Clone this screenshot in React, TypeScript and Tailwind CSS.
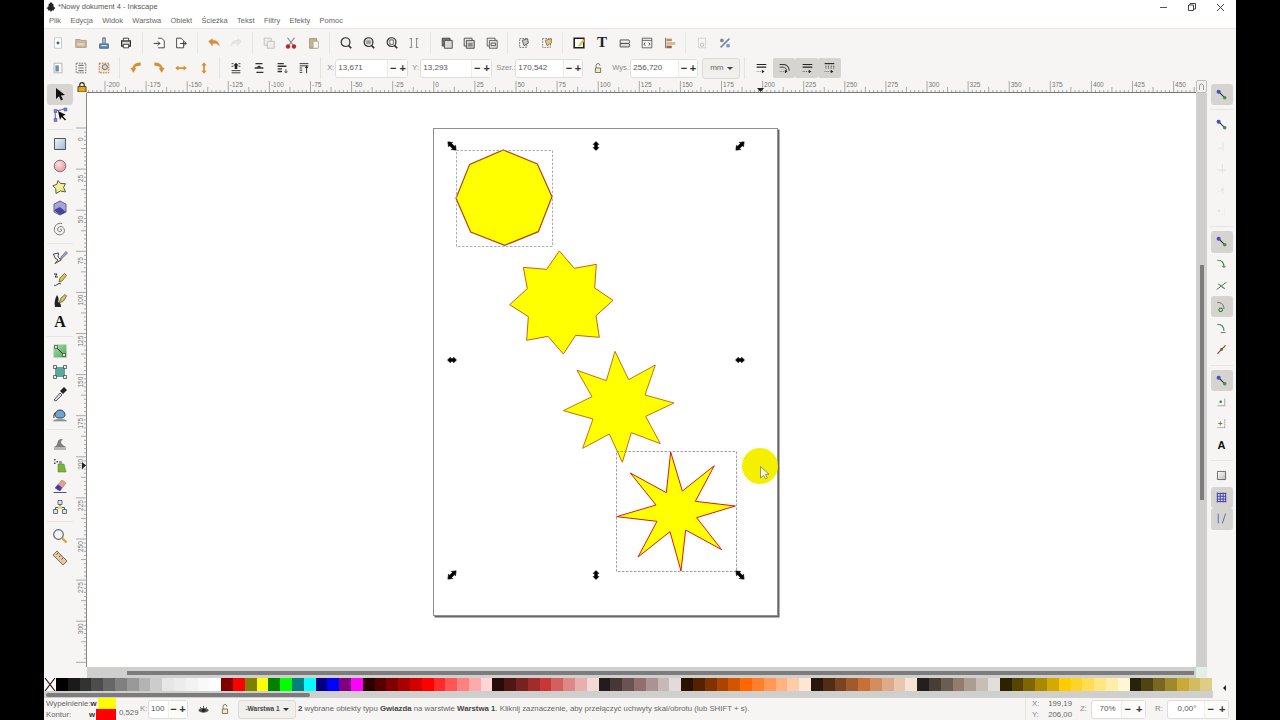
import type { ReactNode } from "react";

const font = "font-['Liberation_Sans',sans-serif]";

const palette = [
  "#000000", "#1a1a1a", "#333333", "#4d4d4d", "#666666", "#808080", "#999999", "#b3b3b3", "#cccccc", "#e6e6e6", "#ececec", "#f2f2f2", "#f9f9f9", "#ffffff",
  "#800000", "#ff0000", "#808000", "#ffff00", "#008000", "#00ff00", "#008080", "#00ffff", "#000080", "#0000ff", "#800080", "#ff00ff",
  "#2b0000", "#550000", "#800000", "#aa0000", "#d40000", "#ff0000", "#ff2a2a", "#ff5555", "#ff8080", "#ffaaaa", "#ffd5d5",
  "#280b0b", "#501616", "#782121", "#a02c2c", "#c83737", "#d35f5f", "#de8787", "#e9afaf", "#f4d7d7",
  "#241c1c", "#483737", "#6c5353", "#916f6f", "#ac9393", "#c8b7b7", "#e3dbdb",
  "#2b1100", "#552200", "#803300", "#aa4400", "#d45500", "#ff6600", "#ff7f2a", "#ff9955", "#ffb380", "#ffccaa", "#ffe6d5",
  "#28170b", "#502d16", "#784421", "#a05a2c", "#c87137", "#d38d5f", "#deaa87", "#e9c6af", "#f4e3d7",
  "#241f1c", "#483e37", "#6c5d53", "#917c6f", "#ac9d93", "#c8beb7", "#e3dedb",
  "#2b2200", "#554400", "#806600", "#aa8800", "#d4aa00", "#ffcc00", "#ffd42a", "#ffdd55", "#ffe680", "#ffeeaa", "#fff6d5",
  "#28220b", "#504416", "#786721", "#a0892c", "#c8ab37", "#d3bc5f", "#decd87",
];

const arrowOrange = "#d9902f";

const icons: Record<string, ReactNode> = {
  new: <><path d="M4 2h8v12H4z" fill="#fff" stroke="#c4c4c4" /><circle cx="8" cy="8" r="1.7" fill="#3465a4" /></>,
  open: <><path d="M2 4h5l1 1h6v8H2z" fill="#c7b99f" stroke="#a99a80" /><path d="M4 8h8v3H4z" fill="#ddd3bf" /></>,
  save: <><path d="M3 9h10v5H3z" fill="#5f8ab8" stroke="#41648c" /><path d="M6.5 2h3v7h-3z" fill="#a9bccb" stroke="#5f7488" /><path d="M5 11h6" stroke="#fff" /></>,
  print: <><path d="M3 5.5h10v6H3z" fill="#d8d8d8" stroke="#2e2e2e" strokeWidth="1.4" /><path d="M5 2.5h6v3H5zM5 9.5h6v4H5z" fill="#fff" stroke="#2e2e2e" /></>,
  import: <><path d="M7 2.5h4l3 3v8H7" fill="#fff" stroke="#333" /><path d="M2 8.5h7M6.5 6l2.5 2.5L6.5 11" fill="none" stroke="#222" /></>,
  export: <><path d="M3 2.5h5l3 3v8H3z" fill="#fff" stroke="#333" /><path d="M7 8.5h7M11.5 6L14 8.5 11.5 11" fill="none" stroke="#222" /></>,
  undo: <path d="M2 6l4-3v2.2c4-.5 7.5 1.5 8 6-1.5-2.5-4-3-8-2.7V11z" fill={arrowOrange} stroke="#b87820" strokeWidth=".5" />,
  redo: <path d="M14 6l-4-3v2.2c-4-.5-7.5 1.5-8 6 1.5-2.5 4-3 8-2.7V11z" fill="#e6e5e2" stroke="#d4d3d0" strokeWidth=".5" />,
  copy: <><path d="M2.5 2.5h8v8h-8z" fill="#f3f2f0" stroke="#bcbcbc" /><path d="M6 6h8v8H6z" fill="#eeeeec" stroke="#bcbcbc" /></>,
  cut: <><path d="M4 2l6 8M12 2l-6 8" stroke="#8a8a8a" strokeWidth="1.4" /><circle cx="4.6" cy="12" r="2.5" fill="#b52a2a" /><circle cx="11.4" cy="12" r="2.5" fill="#b52a2a" /></>,
  paste: <><path d="M3 3h8v11H3z" fill="#c8b48f" stroke="#a0906f" /><path d="M7 6h6v8H7z" fill="#f7f7f5" stroke="#aaa" /></>,
  zoom1: <><circle cx="7.5" cy="7" r="5" fill="#eee" stroke="#333" strokeWidth="1.4" /><path d="M11 11l3 3" stroke="#333" strokeWidth="2" /></>,
  zoom2: <><circle cx="7.5" cy="7" r="5" fill="#ddd" stroke="#333" strokeWidth="1.4" /><path d="M5 5h5v4H5z" fill="#999" /><path d="M11 11l3 3" stroke="#333" strokeWidth="2" /></>,
  zoom3: <><circle cx="7.5" cy="7" r="5" fill="#eee" stroke="#333" strokeWidth="1.4" /><path d="M5.5 4.5h4v5h-4z" fill="#fff" stroke="#555" /><path d="M11 11l3 3" stroke="#333" strokeWidth="2" /></>,
  fit: <path d="M3 3h3M10 3h3M3 13h3M10 13h3M5 3v10M11 3v10" fill="none" stroke="#777" />,
  group1: <><path d="M2.5 2.5h9v9h-9z" fill="#777" stroke="#444" /><path d="M5 5h9v9H5z" fill="#d8d8d6" stroke="#444" /></>,
  group2: <><path d="M2.5 2.5h9v9h-9z" fill="#eee" stroke="#444" /><path d="M5 5h9v9H5z" fill="#ccc" stroke="#444" /><path d="M7 8h5v4H7z" fill="#888" /></>,
  group3: <><path d="M2.5 2.5h9v9h-9z" fill="#f5f5f3" stroke="#555" /><path d="M5 5h9v9H5z" fill="#e2e2e0" stroke="#555" /><path d="M7 8h5v3H7z" fill="none" stroke="#555" /></>,
  clone1: <><path d="M3 3h8v10H3z" fill="none" stroke="#666" strokeDasharray="2 1" /><path d="M6 5l6-2 1 5-5 3z" fill="#c7c7c5" stroke="#555" /></>,
  clone2: <><path d="M3 3h9v10H3z" fill="none" stroke="#777" strokeDasharray="2 1" /><path d="M6 5l7-2v5l-5 3z" fill="#d9c98a" stroke="#86763c" /></>,
  fillStroke: <><path d="M2.5 2.5h11v11h-11z" fill="#fff" stroke="#1f1f1f" strokeWidth="1.8" /><path d="M7 11l6-8 1 3-5 6z" fill="#d9c63a" /></>,
  layers: <><path d="M2.5 4.5h10l1 2-1 2h-10z" fill="#eee" stroke="#444" /><path d="M2.5 8.5h10l1 2-1 2h-10z" fill="#ddd" stroke="#444" /></>,
  xml: <><path d="M2.5 2.5h11v11h-11z" fill="#f4f4f2" stroke="#555" /><path d="M2.5 5h11" stroke="#555" /><path d="M6 7.5L4.5 9.3 6 11M10 7.5l1.5 1.8L10 11" fill="none" stroke="#333" /></>,
  align: <><path d="M3 2v12" stroke="#555" /><path d="M4 3h6v3H4z" fill="#c88a5c" /><path d="M4 7h10v3H4z" fill="#c9b79a" /><path d="M4 11h6v3H4z" fill="#b35a4a" /></>,
  prefsDoc: <><path d="M4 2.5h8v11H4z" fill="#f6f6f4" stroke="#d0d0ce" /><circle cx="8" cy="10" r="2" fill="none" stroke="#b5b5b3" /></>,
  prefs: <><path d="M3 13L13 3" stroke="#6f8eb0" strokeWidth="2" /><circle cx="4.5" cy="5" r="2.2" fill="#8a8a88" /><circle cx="11.5" cy="11" r="2.2" fill="#7d9ab8" /></>,
  selAll: <><path d="M3.5 2.5h9v11h-9z" fill="#fff" stroke="#aaa" /><path d="M5 5h4v7H5z" fill="#6b8fb5" /></>,
  selLayer: <><path d="M2.5 2.5h11v11h-11z" fill="none" stroke="#666" strokeDasharray="2 1" /><path d="M5 5h6M5 8h6M5 11h6" stroke="#777" strokeWidth="1.4" /></>,
  deselect: <><path d="M2.5 2.5h11v11h-11z" fill="#f0e5d5" stroke="#b86b30" strokeDasharray="2 1" /><circle cx="9" cy="7" r="3" fill="#d4d4d2" stroke="#666" /></>,
  rotL: <path d="M13 2c-5 0-8 2-9 6H2l3 5 3-5H6c.5-2 3-3 7-3z" fill={arrowOrange} stroke="#bb7a24" strokeWidth=".4" />,
  rotR: <path d="M3 2c5 0 8 2 9 6h2l-3 5-3-5h2c-.5-2-3-3-7-3z" fill={arrowOrange} stroke="#bb7a24" strokeWidth=".4" />,
  flipH: <path d="M1.5 8L5 5v2h6V5l3.5 3L11 11V9H5v2z" fill={arrowOrange} />,
  flipV: <path d="M8 1.5L11 5H9v6h2l-3 3.5L5 11h2V5H5z" fill={arrowOrange} />,
  top: <><path d="M3 13.5h10M3 11h10" stroke="#222" /><path d="M6.5 9V5H5l3-3 3 3H9.5v4z" fill="#222" /><path d="M3 3h2M11 3h2M3 6h2M11 6h2" stroke="#222" /></>,
  up: <><path d="M4 3h8M3 8h10M5 13h8" stroke="#333" strokeWidth="1.6" /><path d="M8 5l-3 2h6z" fill="#222" /></>,
  down: <><path d="M3 3h7M3 6h10M3 9h5M3 12h5" stroke="#333" strokeWidth="1.5" /><path d="M12 9v3h-2l2.5 2 2.5-2h-2V9z" fill="#555" /></>,
  bottom: <><path d="M3 3h10M3 5.5h10M3 8h3M3 10.5h3M3 13h3" stroke="#222" /><path d="M10.5 14V8H9l2-3 2 3h-1.5v6z" fill="#222" /></>,
  tr1: <><path d="M3 4h11M3 7h11" stroke="#222" strokeWidth="1.4" /><path d="M3 12h6" stroke="#777" strokeDasharray="1 1" /><path d="M9 10l3 2-3 2z" fill="#222" /></>,
  tr2: <><path d="M3 4h5c3 0 6 3 6 7" fill="none" stroke="#333" strokeWidth="1.2" /><path d="M3 7h4c2 0 4 2 4 4" fill="none" stroke="#333" /><path d="M3 12h5" stroke="#777" strokeDasharray="1 1" /><path d="M9 10l3 2-3 2z" fill="#222" /></>,
  tr3: <><path d="M3 4h11M3 7h11" stroke="#222" strokeWidth="1.4" /><path d="M3 12h7" stroke="#555" strokeDasharray="1 1" /><path d="M10 10l3 2-3 2z" fill="#222" /></>,
  tr4: <><path d="M3 3h11" stroke="#222" strokeWidth="1.3" /><path d="M4 6h1M7 6h1M10 6h1M13 6h1M4 8h1M7 8h1M10 8h1M13 8h1" stroke="#222" strokeWidth="1.4" /><path d="M3 12h7" stroke="#555" strokeDasharray="1 1" /><path d="M10 10l3 2-3 2z" fill="#222" /></>,
  lockOpen: <><path d="M4.5 8h7v6h-7z" fill="#f4e9c4" stroke="#5c5434" /><path d="M5.5 8V4.5a2.5 2.5 0 015 0V5" fill="none" stroke="#555" /></>,
  eye: <><path d="M1.5 9c2-4 11-4 13 0-2 4-11 4-13 0z" fill="#555" /><circle cx="8" cy="9" r="2.2" fill="#222" /><path d="M4 5l1 2M8 3.5V6M12 5l-1 2" stroke="#333" /></>,
  selector: <path d="M4 2l0 11 3-2.7 2 4.2 2-1-2-4 4-.4z" fill="#111" />,
  node: <><path d="M3 3.5h4l6-2M3 3.5l.5 9" fill="none" stroke="#5b5bb5" /><path d="M2 2.5h3v3H2zM12 1h3v3h-3zM2 11.5h3v3H2z" fill="#8080cc" stroke="#4d4da0" strokeWidth=".5" /><path d="M6 4l2 9 1.5-3 3.5 3.5 1-1-3.3-3.5 3-1.2z" fill="#111" /></>,
  rect: <><path d="M2.5 2.5h11v11h-11z" fill="url(#rectGrad)" stroke="#555" /></>,
  circle: <circle cx="8" cy="8" r="5.8" fill="url(#circleGrad)" stroke="#777" />,
  star: <path d="M6 1.5l2.5 3 5 .2-2 3.6 2 4.6-5.2-1L4 14.5l-.2-4.7-3-3 4-1.4z" fill="#f2ef9c" stroke="#5b5b34" />,
  box3d: <><path d="M8 1L14 4v8l-6 3-6-3V4z" fill="#a4a4d6" stroke="#66668a" /><path d="M2 10l6-3 6 5-6 3z" fill="#45459a" /></>,
  spiral: <path d="M8 8.5c1-1 2 0 1.500 1.300-.7 1.300-3 1.200-3.700-.4-.8-2 .9-4 3-3.900 3 .2 4.400 3.500 3.100 6-1.500 2.700-5.500 3-7.800 1C1.500 10.500 1.900 6 4.500 3.700 6 2.500 8 2 10 2.500" fill="none" stroke="#666" strokeWidth=".9" />,
  pencil: <><path d="M1.500 4l5-1-.5 4 3 3-6 3.500 3-3.500L3 8z" fill="none" stroke="#444" /><path d="M8 11l1-4 5-5.500 1.500 1.500L10 8.500z" fill="#8fb0c9" stroke="#445" strokeWidth=".6" /></>,
  pen: <><path d="M2 2h3L3 5h3M2 13c2 2 4-3 7-1" fill="none" stroke="#333" /><path d="M7 10l1-4 4.500-4.500 2 2L10 9z" fill="#e8c93a" stroke="#444" strokeWidth=".7" /></>,
  calligraphy: <><path d="M3 14C2 9 3 6 5 2c2 3 2 5 1 7 2 .5 3 2 3 5z" fill="#222" /><path d="M7 10l2-5 4-3.500 1.500 1.500-3 5z" fill="#d9c84a" stroke="#444" strokeWidth=".7" /></>,
  gradient: <><path d="M1.500 1.500h13v13h-13z" fill="url(#gradGrad)" /><path d="M4 4l8 8" stroke="#333" /><path d="M2.500 2.500h3v3h-3zM10.500 10.500h3v3h-3z" fill="#ddd" stroke="#333" strokeWidth=".6" /></>,
  mesh: <><path d="M3 3h10v10H3z" fill="#5fa59a" /><path d="M1.500 1.500h3v3h-3zM11.500 1.500h3v3h-3zM1.500 11.500h3v3h-3zM11.500 11.500h3v3h-3z" fill="#eee" stroke="#333" strokeWidth=".7" /></>,
  dropper: <><path d="M2 14l6-7 2 2-6 6z" fill="#dde" stroke="#555" /><path d="M8 5l4-4 3 3-4 4z" fill="#222" /></>,
  bucket: <><path d="M3 8a5 5 0 0110 0c0 2-2 3-5 3S3 10 3 8z" fill="#6fa6d0" stroke="#345" /><path d="M1.500 14c2-2.500 11-2.500 13 0z" fill="#93a89e" stroke="#667" strokeWidth=".5" /><path d="M3 6c-1 1-1.500 3-1 5" fill="none" stroke="#333" /></>,
  tweak: <><path d="M2 11c3-1 3-3 4-6 1-2 4-3 5-1-2 0-2.500 2-1.500 3.500 1 1.500 3 2.500 4.500 3.500z" fill="#7d7d7d" /><path d="M2 11h12v3H2z" fill="#b5b5b5" /></>,
  spray: <><path d="M6 7h6l2 8H6z" fill="#7bb33a" stroke="#4a7a1c" strokeWidth=".5" /><path d="M7 4h3v3H7z" fill="#999" /><path d="M2 2h1.500v1.500H2zM4.500 4H6v1.500H4.500zM2 5.500h1.500V7H2z" fill="#444" /></>,
  eraser: <><path d="M3 10l7-8 4 3-6 8z" fill="#e2a28d" stroke="#a55" strokeWidth=".5" /><path d="M3 10l3-3.500 4 3L8 13z" fill="#3a3ac0" /><path d="M1.500 14.500h13" stroke="#555" /></>,
  connector: <><path d="M6 1.500h4v4H6zM1.500 10.500h4v4h-4zM10.500 10.500h4v4h-4z" fill="#dfe4ea" stroke="#456" strokeWidth=".8" /><path d="M8 5.500v3M3.500 10.500v-2h9v2" fill="none" stroke="#456" /><path d="M6 7h4v3H6z" fill="#f0d76a" /></>,
  zoom: <><circle cx="6.500" cy="6.500" r="4.800" fill="#f2f5f8" stroke="#667" strokeWidth="1.200" /><path d="M10 10l4.500 4.500" stroke="#d9a62e" strokeWidth="2.400" /></>,
  measure: <><path d="M1 5L5 1l10 10-4 4z" fill="#e3c8a8" stroke="#8a6f52" /><path d="M4.500 4.500L6 3M7 7l1.500-1.500M9.500 9.500L11 8" stroke="#6d5236" /></>,
  snapMain: <><path d="M5 5l7 7" stroke="#222" strokeWidth="1.300" /><circle cx="4.500" cy="4.500" r="2.500" fill="#4a4ac8" /><circle cx="12" cy="12" r="2.200" fill="#4f8a5a" /></>,
  faint1: <path d="M3 10h7M10 3v11" stroke="#e4e4e2" />,
  faint2: <path d="M3 10h10M9 3v10" stroke="#dadad8" />,
  faint3: <><path d="M3 10h7M10 4v9" stroke="#e6e6e4" /><circle cx="9" cy="8" r="1.300" fill="#ddd" /></>,
  faint4: <><path d="M3 12h9M12 4v8" stroke="#e4e4e2" strokeDasharray="1 1" /><circle cx="5" cy="7" r="1.300" fill="#ddd" /></>,
  snapPath: <><path d="M3 4c5 0 8 3 8 8" fill="none" stroke="#2f8a3f" strokeWidth="1.400" /><path d="M9 11l2 2 2-2" fill="none" stroke="#333" /></>,
  snapCross: <><path d="M2 13L14 4" stroke="#444" /><path d="M4 6l8 6" stroke="#3f8f5f" strokeWidth="1.400" /></>,
  snapPathActive: <><path d="M3 3c5 0 8 3 8 8" fill="none" stroke="#666" strokeWidth="1.200" /><circle cx="7" cy="12" r="2.200" fill="none" stroke="#2f7a2f" strokeWidth="1.300" /></>,
  snapTan: <><path d="M3 3c5 0 8 3 8 8" fill="none" stroke="#3f8f5f" strokeWidth="1.400" /><path d="M7 13h6" stroke="#555" /></>,
  snapMid: <><path d="M3 13L13 3" stroke="#b03030" strokeWidth="1.500" /><circle cx="8" cy="8" r="1.700" fill="#3f7a3f" /></>,
  snapBox: <><path d="M3 12h9V3" fill="none" stroke="#999" /><circle cx="7" cy="7" r="1.500" fill="#3f7a3f" /></>,
  snapCenter: <><path d="M3 13h9M12 3v10" stroke="#777" strokeDasharray="1.500 1" /><path d="M4 8h5M6.500 5.500v5" stroke="#3f7a3f" /></>,
  snapPage: <><path d="M3 3h10v10H3z" fill="url(#pageGrad)" stroke="#555" /></>,
  snapGrid: <path d="M3 2v12M6.500 2v12M10 2v12M13 2v12M2 3h12M2 6.500h12M2 10h12M2 13h12" stroke="#3a3ab0" strokeWidth="1.100" />,
  snapGuide: <path d="M4 2v12M13 2L9 14" stroke="#5070b0" strokeWidth="1.200" fill="none" />,
};

function Icon({ name, size = 15 }: { name: string; size?: number }) {
  return (
    <svg width={size} height={size} viewBox="0 0 16 16">
      {icons[name]}
    </svg>
  );
}

function Sep() {
  return <div className="ml-1 mr-[4.600px] h-[22px] w-px shrink-0 bg-[#e6e5e1]" />;
}

function Btn({ name, active }: { name: string; active?: boolean }) {
  return (
    <div className={`flex h-5 w-[22.700px] shrink-0 items-center justify-center rounded-[2px] ${active ? "bg-[#d6d4d0]" : ""}`}>
      <Icon name={name} size={14} />
    </div>
  );
}

function Label({ children, className = "" }: { children: ReactNode; className?: string }) {
  return <span className={`shrink-0 text-[7.500px] leading-none text-[#8a8a88] ${className}`}>{children}</span>;
}

function Spin({ value, width, field, center }: { value: string; width: string; field: string; center?: boolean }) {
  return (
    <div className={`flex h-[19px] shrink-0 items-center rounded-[3px] border border-[#dfdedb] bg-white text-[8px] text-[#555] ${width}`}>
      <span className={`${field} pl-[2px] ${center ? "text-center" : ""}`}>{value}</span>
      <div className="flex h-full flex-1 items-center justify-around border-l border-[#eeeeec] bg-[#fbfbfa] text-[11px] font-bold leading-none text-[#333]">
        <span>−</span>
        <span>+</span>
      </div>
    </div>
  );
}

function VSep({ h }: { h: string }) {
  return (
    <div className={`flex w-full shrink-0 items-center ${h}`}>
      <div className="h-px w-full bg-[#e6e5e1]" />
    </div>
  );
}

const top = ["new", "open", "save", "print", "|", "import", "export", "|", "undo", "redo", "|", "copy", "cut", "paste", "|", "zoom1", "zoom2", "zoom3", "fit", "|", "group1", "group2", "group3", "|", "clone1", "clone2", "|", "fillStroke", "T", "layers", "xml", "align", "|", "prefsDoc", "prefs"];
const leftTools = ["selector", "node", "|", "rect", "circle", "star", "box3d", "spiral", "|", "pencil", "pen", "calligraphy", "A", "|", "gradient", "mesh", "dropper", "bucket", "|", "tweak", "spray", "eraser", "connector", "|", "zoom", "measure"];
const snapTools = ["snapMain*", "|", "snapMain", "faint1", "faint2", "faint3", "faint4", "|", "snapMain*", "snapPath", "snapCross", "snapPathActive*", "snapTan", "snapMid", "|", "snapMain*", "snapBox", "snapCenter", "A", "|", "snapPage", "snapGrid*", "snapGuide*"];

function TopRuler() {
  const ticks = [];
  for (let i = -4; i < 266; i++) {
    const x = 18 + i * 4.11;
    const major = i % 10 === 0;
    const mid = i % 5 === 0;
    ticks.push(<path key={i} d={`M${x} 12V${major ? 1 : mid ? 7 : 10}`} stroke="#8a8a8a" strokeWidth=".7" />);
    if (major) {
      ticks.push(
        <text key={`t${i}`} x={x + 1.500} y={7} fontSize="6.500" fill="#777" fontFamily="Liberation Sans, sans-serif">
          {(i / 10) * 25 - 200}
        </text>,
      );
    }
  }
  return (
    <svg width="1109" height="13" className="block shrink-0">
      <path d="M0 12.500H1109" stroke="#777" />
      {ticks}
      <path d="M670 8h7l-3.500 4z" fill="#222" />
    </svg>
  );
}

function SideRuler() {
  const ticks = [];
  for (let i = 0; i < 131; i++) {
    const y = i * 4.11 + 35;
    const major = i % 10 === 0;
    const mid = i % 5 === 0;
    ticks.push(<path key={i} d={`M10.500 ${y}H${major ? 0 : mid ? 5 : 8}`} stroke="#8a8a8a" strokeWidth=".7" />);
    if (major && i < 130) {
      ticks.push(
        <text key={`t${i}`} fontSize="6.500" fill="#777" fontFamily="Liberation Sans, sans-serif" transform={`translate(7 ${y + 13}) rotate(-90)`}>
          {(i / 10) * 25}
        </text>,
      );
    }
  }
  return (
    <svg width="11" height="574" className="block shrink-0 bg-[#f6f5f3]">
      <path d="M10.500 0V574" stroke="#888" />
      {ticks}
      <path d="M6 369v7l4-3.500z" fill="#222" />
    </svg>
  );
}

function pts(raw: number[], ox: number, oy: number) {
  const out: string[] = [];
  for (let i = 0; i < raw.length; i += 2) out.push(`${ox + raw[i] / 3},${oy + raw[i + 1] / 3}`);
  return out.join(" ");
}

const handleShape = "M-4.500 0L-1.500-3V-1.500H1.500V-3L4.500 0 1.500 3V1.500H-1.500V3Z";
const handles: [number, number, number][] = [
  [452, 146, 45], [596, 146, 90], [740, 146, -45],
  [452, 360, 0], [740, 360, 0],
  [452, 575, -45], [596, 575, 90], [740, 575, 45],
];

function Drawing() {
  return (
    <svg width="1280" height="720" className="absolute left-[-87px] top-[-93px]">
      <polygon points={pts([220, 75, 322, 117, 366, 215, 325, 320, 224, 361, 122, 321, 78, 220, 119, 118], 430, 125)} fill="#ffff00" stroke="#b5460f" strokeWidth="1.200" />
      <polygon points={pts([388, 378, 433, 430, 499, 418, 494, 489, 549, 526, 498, 572, 508, 637, 437, 631, 400, 687, 354, 634, 290, 646, 295, 575, 239, 539, 292, 491, 280, 427, 350, 433], 430, 125)} fill="#ffff00" stroke="#c8640f" />
      <polygon points={pts([555, 19, 596, 104, 676, 60, 645, 150, 732, 174, 647, 214, 691, 296, 604, 263, 577, 352, 538, 267, 458, 310, 489, 222, 400, 197, 486, 155, 441, 76, 529, 107], 430, 345)} fill="#ffff00" stroke="#c8700f" />
      <polygon points={pts([722, 321, 757, 438, 853, 362, 796, 469, 916, 483, 800, 518, 875, 614, 767, 555, 753, 678, 720, 560, 624, 636, 681, 529, 560, 515, 678, 480, 601, 384, 709, 443], 430, 345)} fill="#ffff00" stroke="#d81c10" />
      <path d="M456.500 150.500H552.500V246.500H456.500Z" fill="none" stroke="#999" strokeWidth=".8" strokeDasharray="2.500 1.500" />
      <path d="M616.500 451.500H736.500V571.500H616.500Z" fill="none" stroke="#888" strokeWidth=".8" strokeDasharray="2.500 1.500" />
      {handles.map(([x, y, r]) => (
        <path
          key={`${x}-${y}`}
          d={handleShape}
          fill="#000"
          stroke="#000"
          strokeWidth=".5"
          transform={`translate(${x} ${y}) rotate(${r}) scale(${r === 0 || r === 90 ? 1 : 1.3} 1)`}
        />
      ))}
      <circle cx="760" cy="466" r="18" fill="#f5f000" />
      <path d="M760.500 466.500V478l3-2.500 2 3.300 1.800-1-1.900-3.200 3.600-.3z" fill="#f6f6d8" stroke="#777" strokeWidth=".8" />
    </svg>
  );
}

export default function App() {
  return (
    <div className={`flex h-[720px] w-[1280px] overflow-hidden bg-black ${font}`}>
      <svg width="0" height="0" className="absolute">
        <defs>
          <linearGradient id="rectGrad" x1="0" y1="0" x2="1" y2="1"><stop offset="0" stopColor="#eef4f9" /><stop offset="1" stopColor="#9dbad6" /></linearGradient>
          <radialGradient id="circleGrad" cx=".4" cy=".35"><stop offset="0" stopColor="#fbe4e8" /><stop offset="1" stopColor="#f2a5b0" /></radialGradient>
          <linearGradient id="gradGrad" x1="0" y1="0" x2="1" y2="1"><stop offset="0" stopColor="#a8dcaa" /><stop offset="1" stopColor="#4fa85a" /></linearGradient>
          <linearGradient id="pageGrad" x1="0" y1="0" x2="1" y2="1"><stop offset="0" stopColor="#fff" /><stop offset="1" stopColor="#bbb" /></linearGradient>
        </defs>
      </svg>

      <div className="ml-11 flex h-full w-[1192px] flex-col bg-[#f6f5f3]">
        <div className="flex h-[14px] shrink-0 items-center bg-white pl-[2px] text-[7.500px] text-[#555]">
          <svg width="10" height="10" viewBox="0 0 16 16" className="mr-[2px]">
            <path d="M8 0l5 5-2 1 4 4-2 1-1 3-2-1-2 3-2-3-2 1-1-3-2-1 4-4-2-1z" fill="#222" />
          </svg>
          <span>*Nowy dokument 4 - Inkscape</span>
          <div className="ml-auto flex items-center">
            <span className="h-px w-[7px] bg-[#555]" />
            <svg width="8" height="8" viewBox="0 0 8 8" className="ml-[21px]">
              <path d="M.5 2h5v5.500H.5zM2 2V.5h5.500V6H6" fill="none" stroke="#444" />
            </svg>
            <svg width="9" height="9" viewBox="0 0 9 9" className="ml-[20px] mr-[11px]">
              <path d="M1 1l7 7M8 1L1 8" stroke="#444" />
            </svg>
          </div>
        </div>

        <div className="flex h-[14px] shrink-0 items-center gap-[9.300px] bg-white pl-[5px] text-[7.500px] text-[#666]">
          {["Plik", "Edycja", "Widok", "Warstwa", "Obiekt", "Ścieżka", "Tekst", "Filtry", "Efekty", "Pomoc"].map((item) => (
            <span key={item}>{item}</span>
          ))}
        </div>

        <div className="flex h-[28px] shrink-0 items-center border-t border-[#e6e5e1] pl-[3px]">
          {top.map((name, i) => {
            if (name === "|") return <Sep key={i} />;
            if (name === "T") {
              return (
                <span key={i} className="flex h-5 w-[22.700px] shrink-0 items-center justify-center font-['Liberation_Serif',serif] text-[15px] font-bold leading-none text-[#222]">
                  T
                </span>
              );
            }
            return <Btn key={i} name={name} />;
          })}
        </div>

        <div className="flex h-[24px] shrink-0 items-center pl-[3px]">
          {["selAll", "selLayer", "deselect"].map((n) => <Btn key={n} name={n} />)}
          <Sep />
          {["rotL", "rotR", "flipH", "flipV"].map((n) => <Btn key={n} name={n} />)}
          <Sep />
          {["top", "up", "down", "bottom"].map((n) => <Btn key={n} name={n} />)}
          <Sep />
          <Label className="ml-[2px] w-[8px]">X:</Label>
          <Spin value="13,671" width="w-[73px]" field="w-[51px]" />
          <Label className="ml-[4px] w-[8px]">Y:</Label>
          <Spin value="13,293" width="w-[72px]" field="w-[50px]" />
          <Label className="ml-[4px] w-[19px]">Szer.:</Label>
          <Spin value="170,542" width="w-[68px]" field="w-[47px]" />
          <div className="mx-[7px] flex w-[15px] justify-center"><Icon name="lockOpen" size={12} /></div>
          <Label className="w-[18px]">Wys.:</Label>
          <Spin value="256,720" width="w-[68px]" field="w-[47px]" />
          <div className="ml-[4px] flex h-[21px] w-[38px] shrink-0 items-center justify-center gap-[3px] rounded-[3px] border border-[#dcdbd8] bg-[#f0efec] text-[8px] text-[#666]">
            mm
            <span className="h-0 w-0 border-x-[3px] border-t-[3px] border-x-transparent border-t-[#444]" />
          </div>
          <div className="ml-[4px] mr-[4.500px] h-[22px] w-px shrink-0 bg-[#e6e5e1]" />
          <Btn name="tr1" />
          <Btn name="tr2" active />
          <Btn name="tr3" active />
          <Btn name="tr4" active />
        </div>

        <div className="flex min-h-0 flex-1">
          <div className="flex w-8 shrink-0 flex-col items-center px-[3px] pt-[3.500px]">
            {leftTools.map((name, i) => {
              if (name === "|") return <VSep key={i} h="h-[7.500px]" />;
              if (name === "A") {
                return (
                  <span key={i} className="flex h-[21.300px] shrink-0 items-center font-['Liberation_Serif',serif] text-[16px] font-bold leading-none text-[#111]">
                    A
                  </span>
                );
              }
              return (
                <div key={i} className={`flex h-[21.300px] w-[26px] shrink-0 items-center justify-center rounded-[3px] pr-px ${i === 0 ? "bg-[#d6d4d0]" : ""}`}>
                  <Icon name={name} size={16} />
                </div>
              );
            })}
          </div>

          <div className="flex w-[1131px] flex-col">
            <div className="flex h-[13px] shrink-0">
              <div className="flex w-[11px] shrink-0 items-center justify-center">
                <svg width="10" height="10" viewBox="0 0 10 10">
                  <path d="M1 4.500h8V10H1z" fill="#e0a81f" stroke="#5a4410" />
                  <path d="M2.800 4.500V2.800a2.200 2.200 0 014.400 0v1.700" fill="none" stroke="#333" strokeWidth="1.200" />
                </svg>
              </div>
              <TopRuler />
              <div className="flex w-[11px] shrink-0 items-center justify-center rounded-[2px] border border-[#bdbdbb] bg-[#f1f1ef]">
                <svg width="7" height="7" viewBox="0 0 7 7">
                  <path d="M1.500 7V3a2 2 0 014 0v4" fill="none" stroke="#999" />
                </svg>
              </div>
            </div>
            <div className="flex min-h-0 flex-1">
              <SideRuler />
              <div className="relative min-w-0 flex-1 overflow-hidden bg-white">
                <div className="absolute left-[346px] top-[35px] h-[488px] w-[345px] border border-[#8f8f8f] bg-white shadow-[1.500px_1.500px_0_#666]" />
                <Drawing />
              </div>
              <div className="flex w-[11px] shrink-0 justify-center bg-[#cfcfcd] pt-[172px]">
                <div className="h-[235px] w-1 bg-[#7c7c7c]" />
              </div>
            </div>
            <div className="flex h-[11px] shrink-0 items-center">
              <div className="w-[11px] self-stretch bg-[#f6f5f3]" />
              <div className="flex h-full w-[1109px] items-center bg-[#cfcfcd] pl-[40px]">
                <div className="h-1 w-[1067px] bg-[#7c7c7c]" />
              </div>
              <div className="h-full w-[11px] bg-[#e4efe8]" />
            </div>
          </div>

          <div className="flex w-[29px] shrink-0 flex-col items-center px-[3px] pt-[3.500px]">
            {snapTools.map((item, i) => {
              if (item === "|") return <VSep key={i} h="h-[9px]" />;
              if (item === "A") {
                return (
                  <span key={i} className="flex h-[21.600px] shrink-0 items-center text-[11px] font-bold leading-none text-[#111]">
                    A
                  </span>
                );
              }
              return (
                <div key={i} className={`flex h-[21.600px] w-[22px] shrink-0 items-center justify-center rounded-[3px] ${item.endsWith("*") ? "bg-[#d6d4d0]" : ""}`}>
                  <Icon name={item.replace("*", "")} size={13} />
                </div>
              );
            })}
          </div>
        </div>

        <div className="flex h-[13px] shrink-0">
          <svg width="12" height="13" viewBox="0 0 12 13" className="shrink-0 bg-white">
            <path d="M1 0l10 13M11 0L1 13" stroke="#411" strokeWidth="1.200" />
          </svg>
          <div className="flex w-[1156px]">
            {palette.map((color, i) => (
              <div key={i} className="h-full flex-1" style={{ backgroundColor: color }} />
            ))}
          </div>
          <div className="flex flex-1 items-center justify-center pt-[6px]">
            <span className="h-0 w-0 border-y-[3px] border-r-[3px] border-y-transparent border-r-[#222]" />
          </div>
        </div>
        <div className="flex h-[7px] shrink-0">
          <div className="flex h-full w-[1169px] items-center bg-[#cfcfcd] pl-[2px]">
            <div className="h-1 w-[264px] rounded-full bg-[#7c7c7c]" />
          </div>
        </div>

        <div className="flex h-[22px] shrink-0 items-center text-[7.800px] text-[#666]">
          <div className="flex w-[72px] shrink-0 flex-col">
            <div className="flex h-[11px] items-center pl-[2px]">
              <span className="flex-1">Wypełnienie:</span>
              <b className="mr-[1px] text-[#333]">w</b>
              <div className="h-full w-5 bg-[#ffff00]" />
            </div>
            <div className="flex h-[11px] items-center pl-[2px]">
              <span className="flex-1">Kontur:</span>
              <b className="mr-[1px] text-[#333]">w</b>
              <div className="h-full w-5 bg-[#ff0000]" />
            </div>
          </div>
          <span className="ml-[3px] w-[21px] shrink-0 self-end pb-[1px]">0,529</span>
          <span className="w-2 shrink-0 text-[#888]">K:</span>
          <Spin value="100" width="w-[40px]" field="w-[19px]" />
          <div className="ml-[5px] flex w-[20px] shrink-0 justify-center"><Icon name="eye" size={13} /></div>
          <div className="ml-[2px] flex w-[20px] shrink-0 justify-center"><Icon name="lockOpen" size={12} /></div>
          <div className="ml-[3px] flex h-[19px] w-[58px] shrink-0 items-center justify-center gap-[3px] rounded-[3px] border border-[#dcdbd8] bg-[#f0efec] text-[6.500px] font-semibold text-[#444]">
            -Warstwa 1
            <span className="h-0 w-0 border-x-[3px] border-t-[3px] border-x-transparent border-t-[#333]" />
          </div>
          <p className="ml-[2px] whitespace-nowrap">
            <b className="text-[#444]">2</b> wybrane obiekty typu <b className="text-[#444]">Gwiazda</b> na warstwie <b className="text-[#444]">Warstwa 1</b>. Kliknij zaznaczenie, aby przełączyć uchwyty skal/obrotu (lub SHIFT + s).
          </p>
          <div className="ml-auto flex items-center">
            <div className="grid grid-cols-[14px_26px] border-l border-[#e6e5e1] pl-[6px] leading-[11px] text-[#666]">
              <span className="text-[#888]">X:</span>
              <span className="text-right">199,19</span>
              <span className="text-[#888]">Y:</span>
              <span className="text-right">206,00</span>
            </div>
            <span className="ml-[8px] w-[11px] text-[#888]">Z:</span>
            <Spin value="70%" width="w-[55px]" field="w-[29px]" center />
            <span className="ml-[9px] w-[12px] text-[#888]">R:</span>
            <Spin value="0,00°" width="w-[62px]" field="w-[36px]" center />
            <div className="w-[7px]" />
          </div>
        </div>
      </div>
    </div>
  );
}
